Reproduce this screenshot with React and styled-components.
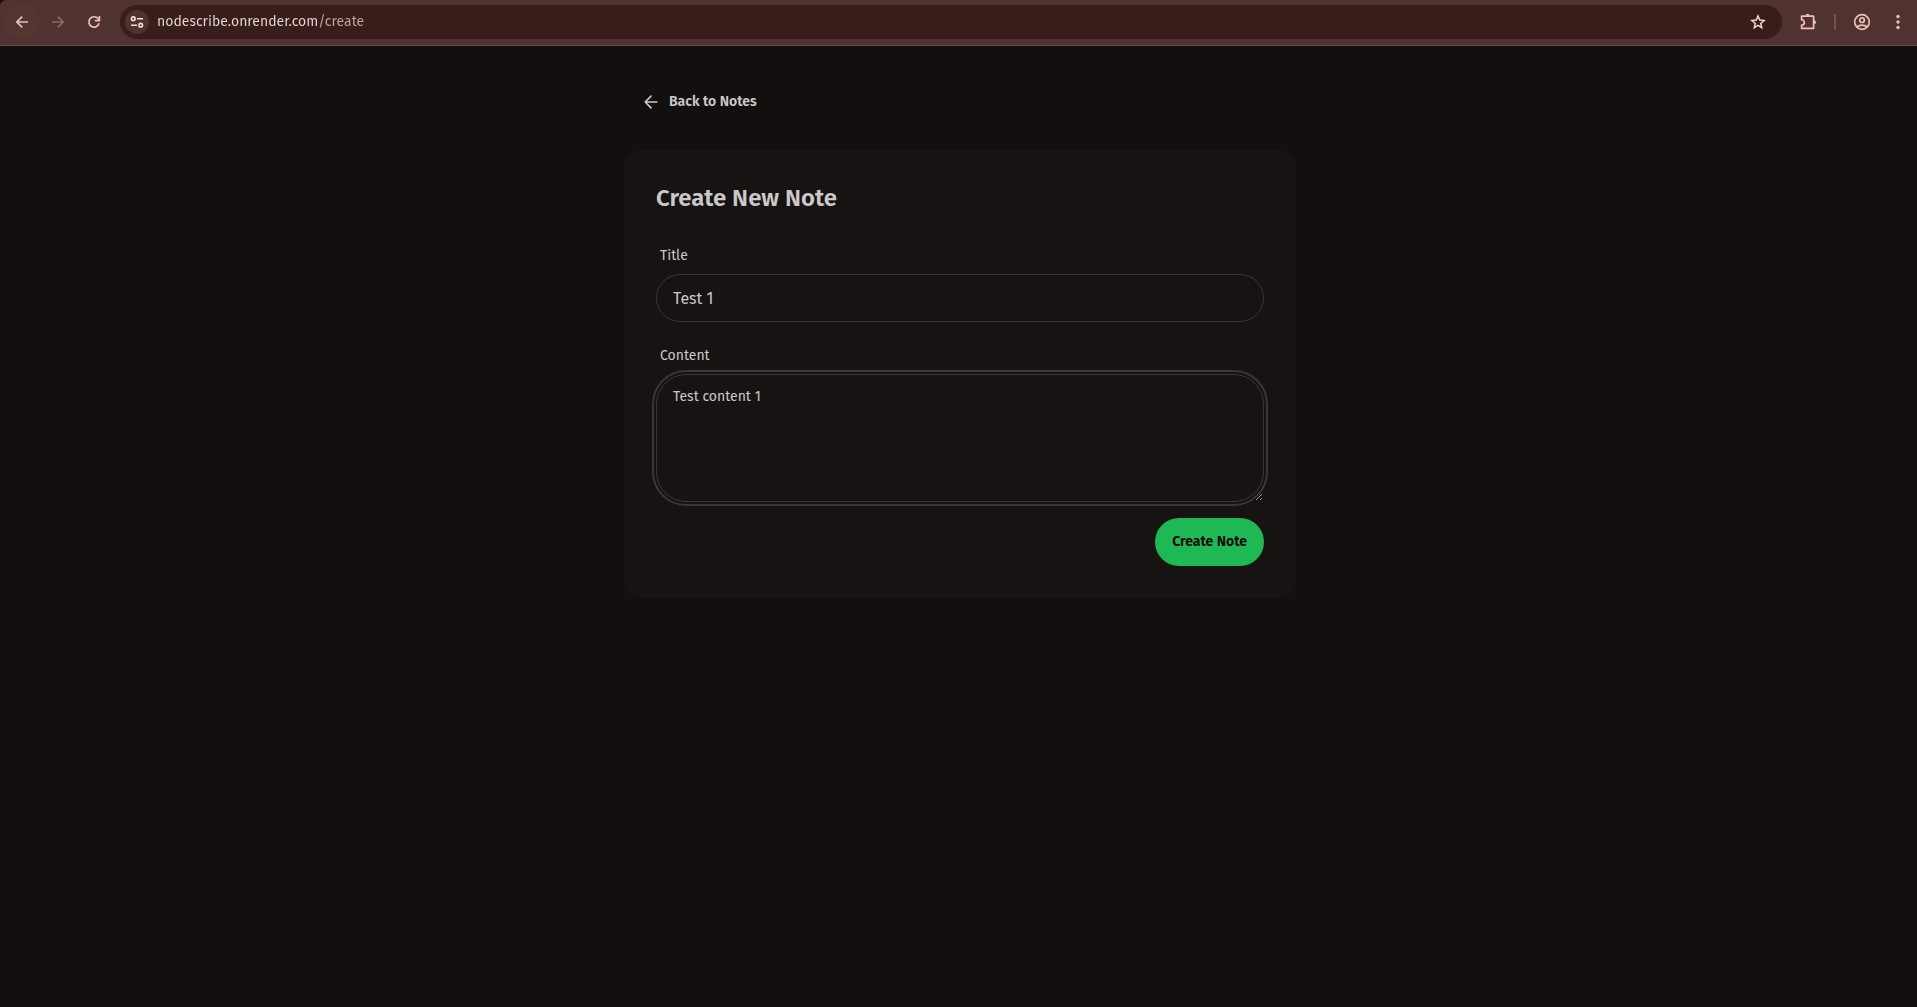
import React, { useState } from "react";
import styled, { createGlobalStyle } from "styled-components";

const uiFont = `"Fira Sans", "Noto Sans", "Open Sans", sans-serif`;

const GlobalStyle = createGlobalStyle`
  *, *::before, *::after { box-sizing: border-box; }
  body {
    margin: 0;
    background: #130f0e;
    color: #cac9c9;
    font-family: ${uiFont};
  }
  button, input, textarea { font-family: inherit; }
`;

const Window = styled.div`
  min-height: 100vh;
  display: flex;
  flex-direction: column;
  border-bottom: 2px solid #170b14;
`;

const Toolbar = styled.header`
  display: flex;
  align-items: center;
  padding: 5px 1px 6px 4px;
  background: #503330;
  border-bottom: 1px solid #644b48;
  border-top-left-radius: 6px;
`;

const IconButton = styled.button`
  display: grid;
  place-items: center;
  flex: none;
  width: 36px;
  height: 34px;
  padding: 0;
  border: 0;
  border-radius: 17px;
  background: ${(p) => (p.$lit ? "#533532" : "transparent")};
  color: ${(p) => (p.disabled ? "#8b6b67" : "#efbfb8")};
`;

const AddressBar = styled.div`
  display: flex;
  align-items: center;
  flex: 1;
  min-width: 0;
  height: 34px;
  margin: 0 8px;
  padding: 0 5px;
  border-radius: 17px;
  background: #381e1b;
`;

const SiteButton = styled.button`
  display: grid;
  place-items: center;
  flex: none;
  width: 24px;
  height: 24px;
  padding: 0;
  border: 0;
  border-radius: 12px;
  background: #503330;
  color: #f3dedb;
`;

const Address = styled.input`
  flex: 1;
  min-width: 0;
  height: 24px;
  padding: 0 8px;
  border: 0;
  outline: 0;
  font-size: 14px;
  line-height: 24px;
  color: #e3d3d0;
  background: linear-gradient(90deg, #e9d9d6 169px, #bfa8a4 169px);
  background-clip: text;
  -webkit-text-fill-color: transparent;
`;

const StarButton = styled(IconButton)`
  width: 38px;
  color: #e9d9d6;
`;

const Actions = styled.div`
  display: flex;
  align-items: center;
`;

const Divider = styled.span`
  width: 2px;
  height: 16px;
  margin: 0 8px;
  background: #73534f;
`;

const Page = styled.main`
  flex: 1;
  padding: 32px 0 32px 3px;
`;

const Column = styled.div`
  width: 100%;
  max-width: 672px;
  margin: 0 auto;
`;

const BackLink = styled.a`
  display: flex;
  align-items: center;
  gap: 8px;
  width: fit-content;
  height: 48px;
  padding: 0 17px;
  margin-bottom: 24px;
  color: inherit;
  font-size: 14px;
  line-height: 14px;
  font-weight: 600;
  text-decoration: none;
`;

const Card = styled.section`
  padding: 32px;
  border-radius: 16px;
  background: #171312;
`;

const Heading = styled.h1`
  margin: 0 0 24px;
  font-size: 24px;
  line-height: 32px;
  font-weight: 600;
`;

const Field = styled.div`
  display: flex;
  flex-direction: column;
  margin-bottom: 16px;
`;

const Label = styled.label`
  padding: 8px 4px;
  font-size: 14px;
  line-height: 20px;
`;

const TextInput = styled.input`
  width: 100%;
  height: 48px;
  padding: 0 16px;
  border: 1px solid #3b3736;
  border-radius: 24px;
  background: transparent;
  color: inherit;
  font-size: 16px;
  line-height: 24px;
`;

const TextArea = styled.textarea`
  display: block;
  width: 100%;
  height: 128px;
  padding: 8px 16px;
  border: 1px solid #3b3736;
  border-radius: 30px;
  outline: 2px solid #3b3736;
  outline-offset: 2px;
  background: transparent;
  color: inherit;
  font-size: 14px;
  line-height: 28px;
  resize: vertical;
`;

const FormActions = styled.div`
  display: flex;
  justify-content: flex-end;
`;

const SubmitButton = styled.button`
  height: 48px;
  padding: 0 17px;
  border: 0;
  border-radius: 24px;
  background: #1eb854;
  color: #000;
  font-size: 14px;
  line-height: 14px;
  font-weight: 600;
`;

function Svg({ size = 20, view = 24, width = 2, children }) {
  return (
    <svg
      width={size}
      height={size}
      viewBox={`0 0 ${view} ${view}`}
      fill="none"
      stroke="currentColor"
      strokeWidth={width}
      aria-hidden="true"
    >
      {children}
    </svg>
  );
}

export default function App() {
  const [title, setTitle] = useState("Test 1");
  const [content, setContent] = useState("Test content 1");

  return (
    <>
      <GlobalStyle />
      <Window>
        <Toolbar>
          <IconButton $lit aria-label="Back">
            <Svg size={16} view={16} width={1.7}>
              <path d="M14 8H3M8.2 2.6 2.8 8l5.4 5.4" />
            </Svg>
          </IconButton>
          <IconButton disabled aria-label="Forward">
            <Svg size={16} view={16} width={1.7}>
              <path d="M2 8h11M7.8 2.6 13.2 8l-5.4 5.4" />
            </Svg>
          </IconButton>
          <IconButton aria-label="Reload">
            <Svg size={16} view={16} width={1.7}>
              <path d="M13.1 9.3A5.2 5.2 0 1 1 12.2 4.8L13.3 6M13.4 2v4.6H8.8" />
            </Svg>
          </IconButton>
          <AddressBar>
            <SiteButton aria-label="Site information">
              <Svg size={16} view={16} width={1.6}>
                <circle cx="4.3" cy="4.7" r="1.8" />
                <path d="M8 4.7h6M2 11.2h6" />
                <circle cx="11.7" cy="11.2" r="1.8" />
              </Svg>
            </SiteButton>
            <Address aria-label="Address" defaultValue="nodescribe.onrender.com/create" />
            <StarButton aria-label="Bookmark">
              <Svg size={16} view={16} width={1.5}>
                <path d="m8 2 1.7 4.1 4.4.4-3.4 2.9 1 4.3L8 11.4l-3.7 2.3 1-4.3-3.4-2.9 4.4-.4z" />
              </Svg>
            </StarButton>
          </AddressBar>
          <Actions>
            <IconButton aria-label="Extensions">
              <Svg size={18} view={18} width={1.7}>
                <path d="M2.6 3.2h12v12.2h-12v-3.3a2.7 2.7 0 0 0 0-5.4z" strokeLinejoin="round" />
                <path d="M6.6 2.8a2 2 0 0 1 4 0zM15 7.300a2 2 0 0 1 0 4z" fill="currentColor" stroke="none" />
              </Svg>
            </IconButton>
            <Divider />
            <IconButton aria-label="Profile">
              <Svg size={18} view={18} width={1.7}>
                <circle cx="9" cy="9" r="7.3" />
                <circle cx="9" cy="7.2" r="2.3" />
                <path d="M3.8 14c2.800-2.500 7.600-2.500 10.400 0" />
              </Svg>
            </IconButton>
            <IconButton aria-label="Menu">
              <Svg size={16} view={16} width={0}>
                <g fill="currentColor">
                  <circle cx="8" cy="2.5" r="1.7" />
                  <circle cx="8" cy="8" r="1.7" />
                  <circle cx="8" cy="13.5" r="1.7" />
                </g>
              </Svg>
            </IconButton>
          </Actions>
        </Toolbar>
        <Page>
          <Column>
            <BackLink href="#notes">
              <Svg>
                <path d="m12 19-7-7 7-7M19 12H5" strokeLinecap="round" strokeLinejoin="round" />
              </Svg>
              Back to Notes
            </BackLink>
            <Card>
              <Heading>Create New Note</Heading>
              <form onSubmit={(e) => e.preventDefault()}>
                <Field>
                  <Label htmlFor="title">Title</Label>
                  <TextInput id="title" value={title} onChange={(e) => setTitle(e.target.value)} />
                </Field>
                <Field>
                  <Label htmlFor="content">Content</Label>
                  <TextArea id="content" value={content} onChange={(e) => setContent(e.target.value)} />
                </Field>
                <FormActions>
                  <SubmitButton type="submit">Create Note</SubmitButton>
                </FormActions>
              </form>
            </Card>
          </Column>
        </Page>
      </Window>
    </>
  );
}
